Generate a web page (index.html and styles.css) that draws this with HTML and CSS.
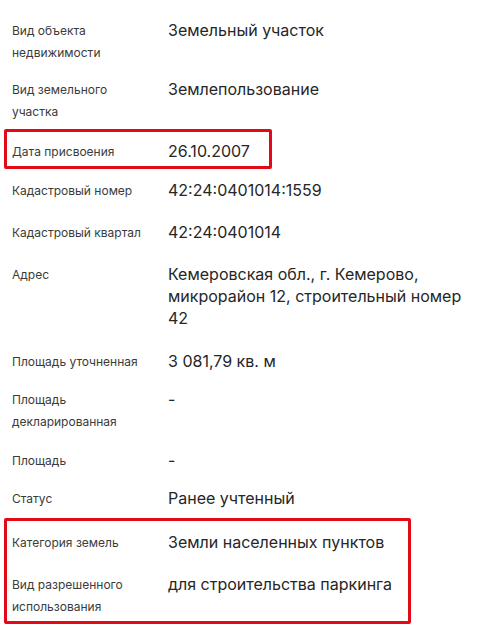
FILE: index.html
```html
<!DOCTYPE html>
<html lang="ru">
<head>
<meta charset="utf-8">
<title>Сведения об объекте</title>
<link rel="stylesheet" href="styles.css">
</head>
<body>
<div class="props">
  <div class="row">
    <div class="label">Вид объекта недвижимости</div>
    <div class="value">Земельный участок</div>
  </div>
  <div class="row g15">
    <div class="label">Вид земельного участка</div>
    <div class="value">Землепользование</div>
  </div>
  <div class="row g18 mark mark-date">
    <div class="label">Дата присвоения</div>
    <div class="value">26.10.2007</div>
  </div>
  <div class="row g17">
    <div class="label">Кадастровый номер</div>
    <div class="value">42:24:0401014:1559</div>
  </div>
  <div class="row g20">
    <div class="label">Кадастровый квартал</div>
    <div class="value">42:24:0401014</div>
  </div>
  <div class="row g20">
    <div class="label">Адрес</div>
    <div class="value">Кемеровская обл., г. Кемерово, микрорайон 12, строительный номер 42</div>
  </div>
  <div class="row g22">
    <div class="label">Площадь уточненная</div>
    <div class="value">3 081,79 кв. м</div>
  </div>
  <div class="row g16">
    <div class="label">Площадь декларированная</div>
    <div class="value">-</div>
  </div>
  <div class="row g17">
    <div class="label">Площадь</div>
    <div class="value">-</div>
  </div>
  <div class="row g16">
    <div class="label">Статус</div>
    <div class="value">Ранее учтенный</div>
  </div>
  <div class="group g22 mark mark-land">
    <div class="row">
      <div class="label">Категория земель</div>
      <div class="value">Земли населенных пунктов</div>
    </div>
    <div class="row g20">
      <div class="label">Вид разрешенного использования</div>
      <div class="value">для строительства паркинга</div>
    </div>
  </div>
</div>
</body>
</html>
```

FILE: styles.css
```css
html, body {
  margin: 0;
  padding: 0;
  background: #ffffff;
}

body {
  font-family: Inter, "Noto Sans", "DejaVu Sans", sans-serif;
  color: #2a2a2a;
}

.props {
  display: flex;
  flex-direction: column;
  padding: 20px 12px 16px 12px;
}

.group {
  display: flex;
  flex-direction: column;
}

.row {
  display: flex;
  align-items: flex-start;
  gap: 16px;
}

.label {
  width: 140px;
  flex: 0 0 140px;
  font-size: 12px;
  line-height: 22px;
  color: #3b3b3b;
}

.value {
  flex: 1 1 auto;
  font-size: 16px;
  line-height: 22px;
  margin-top: -1px;
  color: #262626;
  max-width: 300px;
}

.g15 { margin-top: 15px; }
.g16 { margin-top: 16px; }
.g17 { margin-top: 17px; }
.g18 { margin-top: 18px; }
.g20 { margin-top: 20px; }
.g22 { margin-top: 22px; }

.mark {
  position: relative;
}

.mark::after {
  content: "";
  position: absolute;
  left: -8px;
  border: 3px solid #e20a17;
  border-radius: 2px;
  box-sizing: border-box;
  pointer-events: none;
}

.mark-date::after {
  top: -12px;
  bottom: -6px;
  width: 268px;
}

.mark-land::after {
  top: -14px;
  bottom: -6px;
  width: 407px;
}
```
